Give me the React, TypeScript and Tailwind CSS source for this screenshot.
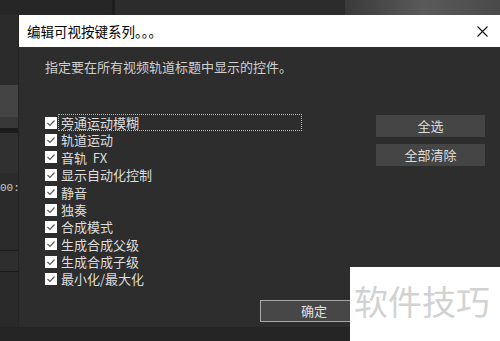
const items = [
  '旁通运动模糊',
  '轨道运动',
  '音轨\u00a0\u00a0FX',
  '显示自动化控制',
  '静音',
  '独奏',
  '合成模式',
  '生成合成父级',
  '生成合成子级',
  '最小化/最大化',
];

const font = { fontFamily: '"Noto Sans CJK SC", "Noto Sans", sans-serif' };

function Check() {
  return (
    <div className="w-[12px] h-[12px] bg-white flex items-center justify-center shrink-0">
      <svg width="12" height="12" viewBox="0 0 12 12">
        <path d="M2.5 6 L5 8.5 L9.5 3.5" fill="none" stroke="#5a5a5a" strokeWidth="1.2" />
      </svg>
    </div>
  );
}

export default function App() {
  return (
    <div className="w-[500px] h-[341px] relative overflow-hidden bg-[#2a2a2a] flex flex-col" style={font}>
      {/* app behind the dialog */}
      <div className="h-[15px] flex shrink-0">
        <div className="w-[112px] bg-[#262626]" />
        <div className="w-[3px] bg-[#1e1e1e]" />
        <div className="w-[230px] bg-[#2c2c2c]" />
        <div className="flex-1 bg-gradient-to-r from-[#3a3a3a] via-[#5a5a5a] to-[#4a4a4a]" />
      </div>

      <div className="flex h-[312px] shrink-0">
        {/* left strip */}
        <div className="w-[18px] flex flex-col shrink-0">
          <div className="h-[70px] bg-[#2b2b2b]" />
          <div className="h-[32px] bg-[#444444]" />
          <div className="h-[11px] bg-[#383838]" />
          <div className="h-[5px] bg-[#1c1c1c]" />
          <div className="h-[40px] bg-[#303030]" />
          <div className="h-[77px] bg-[#2b2b2b] text-[#c8c8c8] text-[11px] leading-none pt-[10px] overflow-hidden whitespace-nowrap font-[Liberation_Mono,monospace]">
            00:
          </div>
          <div className="h-[1px] bg-[#1a1a1a]" />
          <div className="h-[20px] bg-[#2e2e2e]" />
          <div className="h-[1px] bg-[#1a1a1a]" />
          <div className="flex-1 bg-[#2a2a2a]" />
        </div>

        {/* dialog */}
        <div className="flex-1 flex flex-col border-l border-[#242424]">
          <div className="h-[32px] bg-white flex items-center justify-between pl-[8px] pr-[12px] shrink-0">
            <span className="text-[13.5px] text-black">编辑可视按键系列。。。</span>
            <svg width="11" height="11" viewBox="0 0 11 11">
              <path d="M0.5 0.5 L10.5 10.5 M10.5 0.5 L0.5 10.5" stroke="#111" strokeWidth="1.1" />
            </svg>
          </div>

          <div className="flex-1 bg-[#2d2d2d] pl-[26px] pr-[15px] flex flex-col">
            <p className="mt-[11px] text-[13px] leading-[17px] text-[#cfcfcf]">
              指定要在所有视频轨道标题中显示的控件。
            </p>

            <div className="mt-[39px] flex">
              <div className="flex flex-col">
                {items.map((t, i) => (
                  <div key={t} className="h-[17.4px] flex items-center">
                    <Check />
                    <span
                      className={
                        'ml-[1px] pl-[2px] h-[17px] flex items-center text-[13px] text-[#dedede] ' +
                        (i === 0 ? 'w-[244px] border border-dotted border-[#bbbbbb]' : 'border border-transparent')
                      }
                    >
                      {t}
                    </span>
                  </div>
                ))}
              </div>

              <div className="ml-auto mt-[1px] flex flex-col gap-[7px]">
                <button className="w-[109px] h-[22px] bg-[#454545] text-[13px] text-[#dcdcdc]">全选</button>
                <button className="w-[109px] h-[22px] bg-[#454545] text-[13px] text-[#dcdcdc]">全部清除</button>
              </div>
            </div>

            <div className="mt-[9px] pl-[215px]">
              <button className="w-[108px] h-[22px] bg-[#474747] border border-[#a8a8a8] text-[13px] text-[#e0e0e0]">
                确定
              </button>
            </div>
          </div>
        </div>
      </div>

      {/* bottom band */}
      <div className="flex-1 bg-[#252525]" />

      {/* watermark */}
      <div className="absolute left-[350px] top-[267px] w-[150px] h-[74px] bg-white flex items-start pt-[14px] pl-[4px]">
        <span className="text-[34px] leading-[40px] text-[#d2d2d2] tracking-[0px]">软件技巧</span>
      </div>
    </div>
  );
}
